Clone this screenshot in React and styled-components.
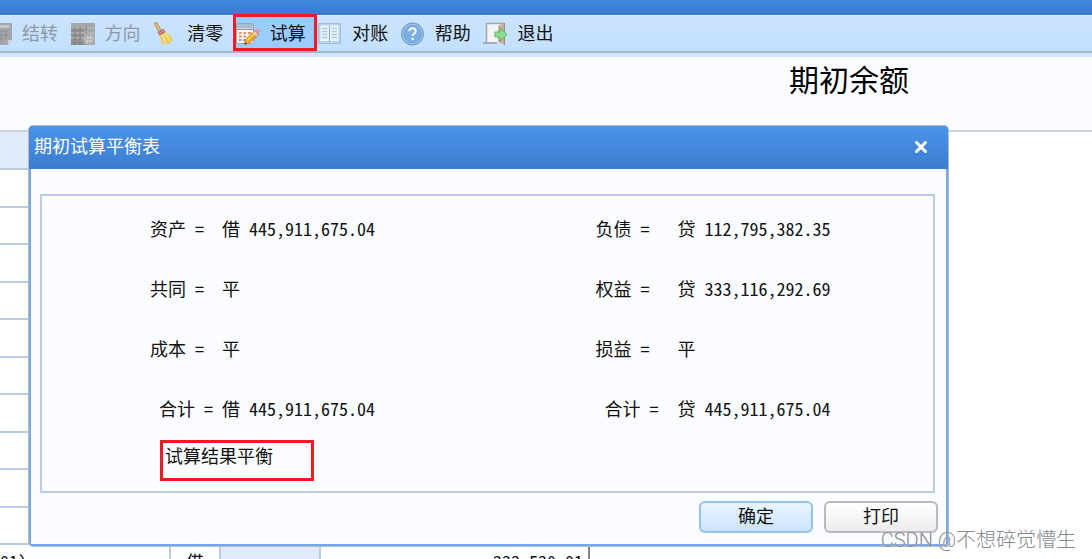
// Packages
import React from "react"
import styled, { createGlobalStyle, css } from "styled-components"

// Variables
const Fonts = {
    Text: `"Liberation Sans", "Noto Sans CJK SC", sans-serif`,
    Figures: `"Noto Sans CJK SC", sans-serif`,
    Light: `Roboto, "Noto Sans CJK SC", sans-serif`,
}

const Colors = {
    Red: "#ed1c24",
    Line: "#b9cce2",
    Pale: "#e0ecfa",
    Surface: "#fbfcff",
    Edge: "#74a8e8",
}

// Styles
const GlobalStyles = createGlobalStyle`
    * {
        box-sizing: border-box;
    }

    body {
        margin: 0;
        overflow: hidden;
        background-color: #fff;
        color: #111;
        font-family: ${Fonts.Text};
        font-size: 18px;
        line-height: 24px;
    }
`

const Page = styled.div`
    position: relative;
    height: 100vh;
    overflow: hidden;
`

const TopBar = styled.div`
    height: 15px;
    background: linear-gradient(#3f86da, #3b7ccf);
`

const Toolbar = styled.nav`
    height: 38px;
    border-top: 1px solid #dcebfa;
    border-bottom: 2px solid #a9b4c0;
    background: linear-gradient(#cbe4ff, #c3e0ff);
    display: flex;
`

const Tools = styled.div`
    flex: none;
    display: grid;
    grid-template-columns: repeat(7, 1fr);
    width: 578px;
    margin-left: -13px;
`

const Tool = styled.button`
    position: relative;
    display: flex;
    align-items: center;
    gap: 10px;
    padding: 1px 0 0 1px;
    border: 0;
    background: none;
    color: #111;
    font: inherit;
    white-space: nowrap;
    cursor: pointer;

    svg {
        flex: none;
    }

    ${props =>
        props.disabled &&
        css`
            color: #8d98a3;
            cursor: default;
        `}

    ${props =>
        props.$active &&
        css`
            background-color: #9accff;
        `}
`

const ToolMark = styled.span`
    position: absolute;
    inset: -2px 0 0 -2px;
    border: 3px solid ${Colors.Red};
    pointer-events: none;
`

const Heading = styled.header`
    height: 79px;
    padding: 6px 0 0 789px;
    border-top: 4px solid #cfe6ff;
    border-bottom: 2px solid #c9d3dd;
    background-color: ${Colors.Surface};
`

const PageTitle = styled.h1`
    margin: 0;
    font-size: 30px;
    font-weight: 400;
    line-height: 36px;
    color: #000;
`

const Sheet = styled.table`
    width: 590px;
    table-layout: fixed;
    border-collapse: separate;
    border-spacing: 0;
    font-family: ${Fonts.Figures};
    font-feature-settings: "hwid";

    tr {
        height: 38px;
    }

    tr:nth-child(even) {
        height: 37px;
    }

    th,
    td {
        padding: 0 5px 4px 0;
        border-right: 2px solid ${Colors.Line};
        border-bottom: 2px solid ${Colors.Line};
        text-align: left;
    }

    th {
        height: 37px;
        background-color: ${Colors.Pale};
    }

    td:last-child {
        border-right-color: #80858c;
        text-align: right;
    }
`

const SideCell = styled.td`
    && {
        padding-right: 0;
        text-align: center;
    }
`

const TintCell = styled.td`
    background-color: ${Colors.Pale};
`

const Dialog = styled.section`
    position: absolute;
    top: 125px;
    left: 28px;
    right: 143px;
    border: 1px solid #b4bcc8;
    border-radius: 5px;
    background-color: ${Colors.Edge};
    overflow: hidden;
`

const DialogHeader = styled.header`
    display: flex;
    align-items: center;
    justify-content: space-between;
    height: 43px;
    padding: 0 20px 2px 5px;
    background: linear-gradient(#4a94e8, #3b7cd0);
`

const DialogTitle = styled.h2`
    margin: 0;
    color: #fff;
    font-size: 18px;
    font-weight: 400;
`

const CloseButton = styled.button`
    display: flex;
    padding: 0;
    border: 0;
    background: none;
    cursor: pointer;
`

const DialogBody = styled.div`
    margin: 0 2px 2px;
    padding: 25px 11px 11px 9px;
    background-color: ${Colors.Surface};
`

const Panel = styled.div`
    padding: 3px 0 10px;
    border: 2px solid ${Colors.Line};
`

const Balances = styled.dl`
    display: grid;
    grid-template-columns: 1fr 1fr;
    grid-auto-rows: 60px;
    margin: 0;
    font-family: ${Fonts.Figures};
    font-feature-settings: "hwid";
`

const Balance = styled.div`
    display: flex;
    align-items: center;
    padding: 0 0 2px 108px;
    white-space: pre;
`

const BalanceLabel = styled.dt`
    flex: none;
    width: ${props => (props.$wide ? "82px" : "72px")};
    padding-left: ${props => (props.$total ? "9px" : "0")};
`

const BalanceValue = styled.dd`
    margin: 0;
`

const Result = styled.p`
    width: 154px;
    height: 41px;
    margin: 1px 0 0 118px;
    padding: 2px;
    border: 3px solid ${Colors.Red};
`

const Actions = styled.div`
    display: flex;
    justify-content: flex-end;
    gap: 11px;
    margin-top: 8px;
    margin-right: -3px;
`

const ActionButton = styled.button`
    width: 114px;
    height: 32px;
    padding: 0;
    border: 2px solid ${props => (props.$primary ? "#92c3f3" : "#b9b9bb")};
    border-radius: 6px;
    background: ${props =>
        props.$primary
            ? "linear-gradient(#e9f6ff, #cbe3ff)"
            : "linear-gradient(#ffffff, #ececef)"};
    color: #111;
    font: inherit;
    cursor: pointer;
`

const Watermark = styled.div`
    position: absolute;
    right: 16px;
    bottom: 6px;
    color: #85898e;
    font-family: ${Fonts.Light};
    font-size: 20px;
    font-weight: 300;
    line-height: 26px;
    text-shadow: 0 0 1px #fff;
    white-space: nowrap;
`

// Icons
const Svg = props => (
    <svg width="24" height="24" viewBox="0 0 24 24" fill="none" aria-hidden="true">
        {props.children}
    </svg>
)

const LedgerIcon = () => (
    <Svg>
        <path d="M1 1h23v17l-4 5H1z" fill="#a3a7ab" />
        <path d="M3 3h18v3H3z" fill="#c3c7ca" />
        <path d="M4 9h16M4 13h16M4 17h12M8 8v12M13 8v12M18 8v9" stroke="#8d9195" />
        <path d="M24 18h-4v5z" fill="#c9d3dc" />
    </Svg>
)

const DirectionIcon = () => (
    <Svg>
        <path d="M0 1h13v22H0z" fill="#8f8f8f" />
        <path d="M13 1h11v22H13z" fill="#a5a5a5" />
        <path d="M0 1h13v4H0z" fill="#a9a9a9" />
        <path d="M0 6h24M0 11h24M0 16h24" stroke="#c2c5c8" />
        <path d="M4 5v18M9 5v18M15 5v18" stroke="#777" strokeDasharray="3 2" />
        <circle cx="18" cy="17" r="6" fill="#b1b1b1" />
        <path d="M15 16h6l-2-2M21 19h-6l2 2" stroke="#dcdcdc" />
    </Svg>
)

const BroomIcon = () => (
    <Svg>
        <path d="M3 2 7 9" stroke="#c9a06c" strokeWidth="4" strokeLinecap="round" />
        <path d="M3 2 6.500 8" stroke="#e2c79c" strokeLinecap="round" />
        <path d="m4.500 10.500 6-3.800 2 3.300-6 3.800z" fill="#b8606a" />
        <path d="m5.500 11.800 6-3.700" stroke="#e5b7aa" />
        <path d="m6.500 13.800 6-3.800q5 2.500 8 8.500l-2.500 1-1.500 2.500-2.500-.4-2 1.200-3-1.200q-.5-4.500-2.500-7.800z" fill="#eacb62" />
        <path d="m9.500 13 3 8M12.200 11.500l5 7.500" stroke="#f8eaa2" strokeWidth="1.300" />
    </Svg>
)

const TrialIcon = () => (
    <Svg>
        <rect x="0.5" y="1.5" width="17" height="20" rx="1.5" fill="#f7f5f0" stroke="#a7a39d" />
        <path d="M1 2h16v4.500H1z" fill="#a9bccd" />
        <path d="M1 7.500h16" stroke="#8e969e" />
        <path d="M3 11h2.500M7.500 11H10M12 11h3M3 14.500h2.500M7.500 14.500H10" stroke="#e58b62" strokeWidth="2" />
        <path d="M3 18h2.500M7 18h2" stroke="#9b9b9b" strokeWidth="2" />
        <path d="m8.500 22.500 1-5 9-8.500 4 3.500-9 8.500z" fill="#f4a62a" stroke="#ba7422" strokeWidth="0.8" />
        <path d="m11 18.500 8.500-8" stroke="#ffd878" strokeWidth="1.500" />
        <path d="m18.500 9 2-1.700q2-.8 3 1t-.5 3l-1 1z" fill="#dd94ab" />
        <path d="m17.500 10 3.700 3.500" stroke="#d8dce2" strokeWidth="1.500" />
        <path d="m8.500 22.500.5-2.500 2 2z" fill="#5a4637" />
    </Svg>
)

const BookIcon = () => (
    <Svg>
        <path d="M.5 1.500h22v20H.5z" fill="#b8d4ee" stroke="#9fbedb" />
        <path d="M2.500 3.500h8l1 1 1-1h8v15.500h-8l-1 1-1-1h-8z" fill="#edf5fc" />
        <path d="M11.500 4v16" stroke="#86a9ca" />
        <path
            d="M4 6.500h5.500M4 9.500h5.500M4 12.500h5.500M4 15.500h5.500M13.500 6.500H19M13.500 9.500H19M13.500 12.500H19M13.500 15.500H19"
            stroke="#aecae3"
            strokeWidth="1.500"
        />
    </Svg>
)

const HelpIcon = () => (
    <Svg>
        <circle cx="11.500" cy="12" r="10.800" fill="#a6c9ea" stroke="#6c9fd2" strokeWidth="1.200" />
        <circle cx="11.500" cy="12" r="8.500" fill="#7cafe0" stroke="#659dd6" />
        <path
            d="M8.300 9.300q.2-3.100 3.300-3.100t3.200 2.700q0 1.500-1.700 2.600-1.400.9-1.400 2.500"
            stroke="#f1f7fd"
            strokeWidth="2"
        />
        <circle cx="11.700" cy="17" r="1.300" fill="#f1f7fd" />
    </Svg>
)

const ExitIcon = () => (
    <Svg>
        <path d="M3.500 20.500v-19h18" stroke="#a9a5a2" strokeWidth="1.500" />
        <path d="M4.500 2.500H17v18H4.500z" fill="#f3f4f6" />
        <path d="M0 21h14" stroke="#9d9b9b" strokeWidth="1.500" />
        <path d="m15 4 7-3v22l-7-3z" fill="#c5ad98" />
        <path d="M21.500 1v22" stroke="#a28b79" />
        <path d="M12 10h5V6l7 6.500-7 6.500v-4h-5z" fill="#8fdc91" stroke="#58b468" />
    </Svg>
)

const CloseIcon = () => (
    <svg width="14" height="14" viewBox="0 0 14 14" aria-hidden="true">
        <path d="m2.500 2.500 9 9m0-9-9 9" stroke="#fff" strokeWidth="3" strokeLinecap="round" />
    </svg>
)

// Data
const tools = [
    { label: "结转", Icon: LedgerIcon, disabled: true },
    { label: "方向", Icon: DirectionIcon, disabled: true },
    { label: "清零", Icon: BroomIcon },
    { label: "试算", Icon: TrialIcon, active: true },
    { label: "对账", Icon: BookIcon },
    { label: "帮助", Icon: HelpIcon },
    { label: "退出", Icon: ExitIcon },
]

const balances = [
    { label: "资产", side: "借", amount: "445,911,675.04" },
    { label: "负债", side: "贷", amount: "112,795,382.35", wide: true },
    { label: "共同", side: "平" },
    { label: "权益", side: "贷", amount: "333,116,292.69", wide: true },
    { label: "成本", side: "平" },
    { label: "损益", side: "平", wide: true },
    { label: "合计", side: "借", amount: "445,911,675.04", total: true },
    { label: "合计", side: "贷", amount: "445,911,675.04", total: true, wide: true },
]

const emptyRows = Array.from({ length: 10 }, (_, index) => index)

function BalanceEntry(props) {
    return (
        <Balance>
            <BalanceLabel $wide={props.wide} $total={props.total}>
                {props.label} =
            </BalanceLabel>
            <BalanceValue>
                {props.side}
                {props.amount && ` ${props.amount}`}
            </BalanceValue>
        </Balance>
    )
}

function App() {
    return (
        <Page>
            <GlobalStyles />
            <TopBar />
            <Toolbar>
                <Tools>
                    {tools.map(({ label, Icon, disabled, active }) => (
                        <Tool key={label} type="button" disabled={disabled} $active={active}>
                            <Icon />
                            {label}
                            {active && <ToolMark />}
                        </Tool>
                    ))}
                </Tools>
            </Toolbar>

            <Heading>
                <PageTitle>期初余额</PageTitle>
            </Heading>

            <Sheet>
                <colgroup>
                    <col width="171" />
                    <col width="50" />
                    <col width="100" />
                    <col width="269" />
                </colgroup>
                <thead>
                    <tr>
                        <th />
                        <th />
                        <th />
                        <th />
                    </tr>
                </thead>
                <tbody>
                    {emptyRows.map(row => (
                        <tr key={row}>
                            <td />
                            <td />
                            <TintCell />
                            <td />
                        </tr>
                    ))}
                    <tr>
                        <td>01)</td>
                        <SideCell>借</SideCell>
                        <TintCell />
                        <td>233,530.01</td>
                    </tr>
                </tbody>
            </Sheet>

            <Dialog role="dialog" aria-labelledby="dialog-title">
                <DialogHeader>
                    <DialogTitle id="dialog-title">期初试算平衡表</DialogTitle>
                    <CloseButton type="button" aria-label="关闭">
                        <CloseIcon />
                    </CloseButton>
                </DialogHeader>
                <DialogBody>
                    <Panel>
                        <Balances>
                            {balances.map((balance, index) => (
                                <BalanceEntry key={index} {...balance} />
                            ))}
                        </Balances>
                        <Result>试算结果平衡</Result>
                    </Panel>
                    <Actions>
                        <ActionButton type="button" $primary>
                            确定
                        </ActionButton>
                        <ActionButton type="button">打印</ActionButton>
                    </Actions>
                </DialogBody>
            </Dialog>

            <Watermark>CSDN @不想碎觉懵生</Watermark>
        </Page>
    )
}

export default App
